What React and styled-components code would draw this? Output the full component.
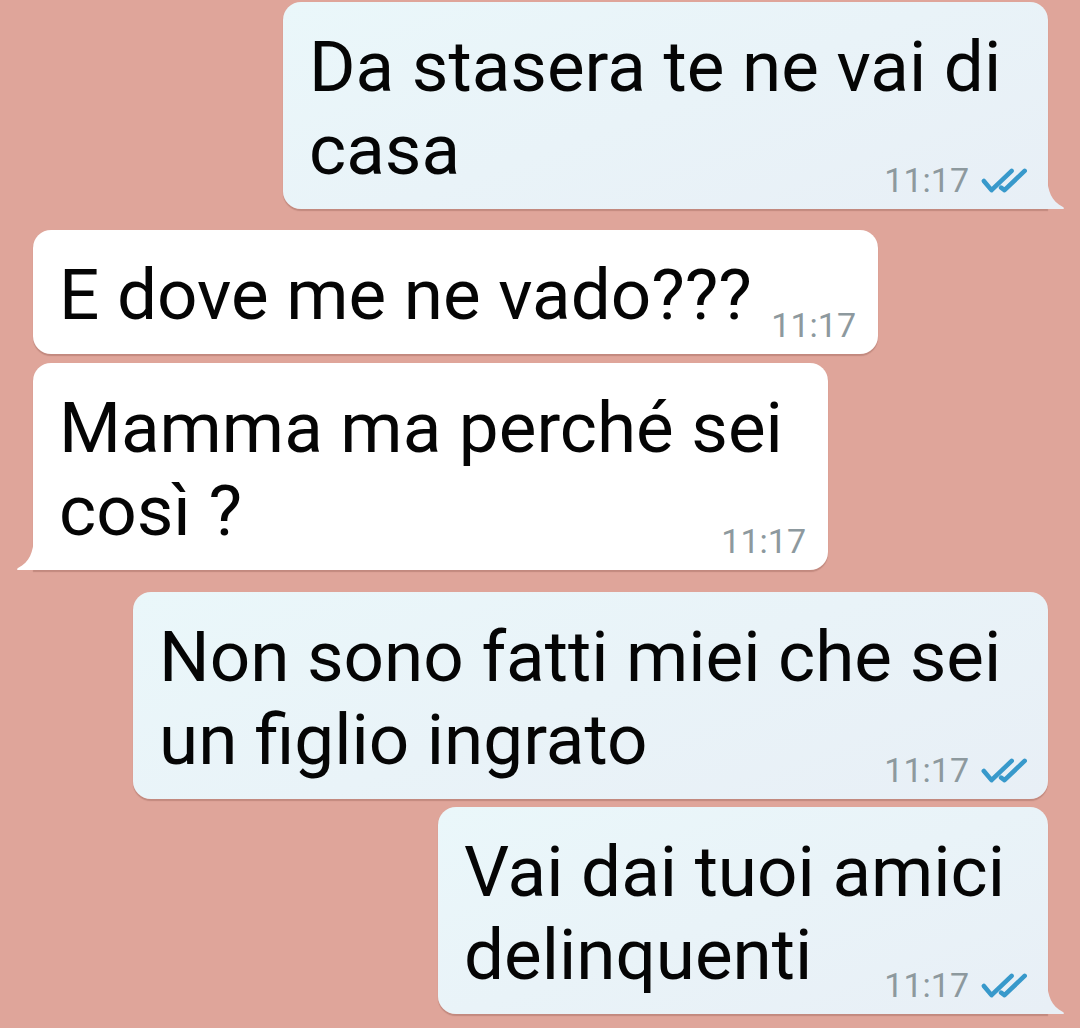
import React from "react";
import styled, { createGlobalStyle } from "styled-components";

const Global = createGlobalStyle`
  html, body { margin: 0; padding: 0; background: #dfa59a; }
  body { font-family: Roboto, "Noto Sans", "Liberation Sans", sans-serif; }
`;

const Chat = styled.div`
  width: 1080px;
  height: 1028px;
  overflow: hidden;
  box-sizing: border-box;
  padding: 2px 32px 0 33px;
  display: flex;
  flex-direction: column;
  background: #dfa59a;
`;

const Bubble = styled.div`
  position: relative;
  box-sizing: border-box;
  width: ${(p) => p.$w}px;
  align-self: ${(p) => (p.$out ? "flex-end" : "flex-start")};
  margin-top: ${(p) => p.$gap}px;
  padding: 23px 20px 18px 26px;
  display: grid;
  background: ${(p) =>
    p.$out ? "linear-gradient(160deg, #eaf7fa 0%, #e8eff6 100%)" : "#ffffff"};
  border-radius: 18px;
  border-bottom-right-radius: ${(p) => (p.$out && p.$tail ? "0" : "18px")};
  border-bottom-left-radius: ${(p) => (!p.$out && p.$tail ? "0" : "18px")};
  box-shadow: 0 1.5px 1px rgba(90, 40, 30, 0.22);
`;

const Text = styled.div`
  grid-area: 1 / 1;
  font-size: 71px;
  line-height: 83px;
  color: #050505;
`;

const Line = styled.span`
  display: block;
  white-space: nowrap;
`;

const Meta = styled.div`
  grid-area: 1 / 1;
  align-self: end;
  justify-self: end;
  display: flex;
  align-items: center;
  gap: 11px;
  margin-bottom: -6px;
  margin-right: ${(p) => (p.$out ? "0" : "2px")};
`;

const Time = styled.span`
  font-size: 34px;
  line-height: 34px;
  color: #8d999e;
`;

const TailSvg = styled.svg`
  position: absolute;
  bottom: 0;
  ${(p) => (p.$out ? "right: -17px;" : "left: -17px;")}
  width: 18px;
  height: 32px;
  display: block;
`;

const Ticks = () => (
  <svg width="48" height="28" viewBox="0 0 50 28" style={{ marginTop: 2 }}>
    <g fill="none" stroke="#3899cb" strokeWidth="4.8" strokeLinecap="round" strokeLinejoin="round">
      <path d="M4 14 L12 23.5 L33 3.5" />
      <path d="M22 21 L25.5 23.5 L46.5 3.5" />
    </g>
  </svg>
);

const Tail = ({ out }) =>
  out ? (
    <TailSvg $out viewBox="0 0 18 32">
      <path d="M0 0 C1 14 4 24 16 30 Q18 31.5 16 32 L0 32 Z" fill="#e8eff6" />
    </TailSvg>
  ) : (
    <TailSvg viewBox="0 0 18 32">
      <path d="M18 0 C17 14 14 24 2 30 Q0 31.5 2 32 L18 32 Z" fill="#ffffff" />
    </TailSvg>
  );

const messages = [
  { out: true, w: 765, gap: 0, tail: true, lines: ["Da stasera te ne vai di", "casa"] },
  { out: false, w: 845, gap: 21, tail: false, lines: ["E dove me ne vado???"] },
  { out: false, w: 795, gap: 9, tail: true, lines: ["Mamma ma perché sei", "così ?"] },
  { out: true, w: 915, gap: 22, tail: false, lines: ["Non sono fatti miei che sei", "un figlio ingrato"] },
  { out: true, w: 610, gap: 8, tail: true, lines: ["Vai dai tuoi amici", "delinquenti"] },
];

export default function App() {
  return (
    <>
      <Global />
      <Chat>
        {messages.map((m, i) => (
          <Bubble key={i} $out={m.out} $w={m.w} $gap={m.gap} $tail={m.tail}>
            <Text>
              {m.lines.map((l, j) => (
                <Line key={j}>{l}</Line>
              ))}
            </Text>
            <Meta $out={m.out}>
              <Time>11:17</Time>
              {m.out && <Ticks />}
            </Meta>
            {m.tail && <Tail out={m.out} />}
          </Bubble>
        ))}
      </Chat>
    </>
  );
}
